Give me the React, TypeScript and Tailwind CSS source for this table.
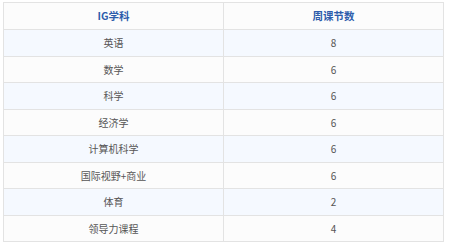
const rows: [string, number][] = [
  ["英语", 8],
  ["数学", 6],
  ["科学", 6],
  ["经济学", 6],
  ["计算机科学", 6],
  ["国际视野+商业", 6],
  ["体育", 2],
  ["领导力课程", 4],
];

export default function App() {
  return (
    <div
      className="w-[450px] h-[248px] bg-white pl-[3px] pt-[2px]"
      style={{ fontFamily: '"Noto Sans CJK SC", "Noto Sans", sans-serif' }}
    >
      <table className="w-[441px] border-collapse table-fixed text-center">
        <thead>
          <tr className="h-[27px] bg-[#fcfcfc]">
            <th className="w-1/2 border border-[#e3e3e3] text-[10.5px] font-bold text-[#2d5cab]">
              IG学科
            </th>
            <th className="w-1/2 border border-[#e3e3e3] text-[10.5px] font-bold text-[#2d5cab]">
              周课节数
            </th>
          </tr>
        </thead>
        <tbody>
          {rows.map(([subject, count], i) => (
            <tr
              key={subject}
              className={i % 2 === 0 ? "h-[26.5px] bg-[#f5f9ff]" : "h-[26.5px] bg-[#fcfcfc]"}
            >
              <td className="border border-[#e3e3e3] text-[10px] text-[#555]">{subject}</td>
              <td className="border border-[#e3e3e3] text-[10px] text-[#555]">{count}</td>
            </tr>
          ))}
        </tbody>
      </table>
    </div>
  );
}
